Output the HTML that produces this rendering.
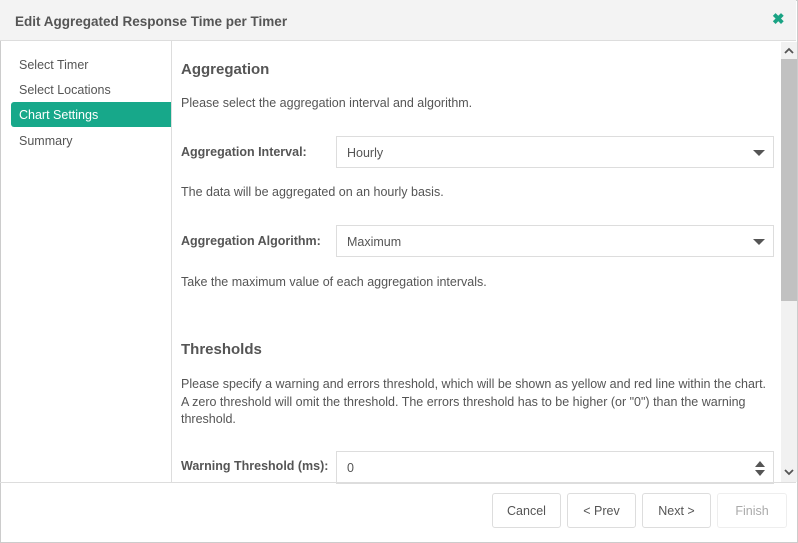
<!DOCTYPE html>
<html><head><style>
*{box-sizing:border-box;margin:0;padding:0}
body{width:798px;height:543px;background:#fff;font-family:"Liberation Sans",sans-serif;color:#555;font-size:12.5px;position:relative;overflow:hidden}
.dlg{position:absolute;left:0;top:0;width:798px;height:543px;border:1px solid #ccc}
.hdr{position:absolute;left:0;top:0;width:796px;height:41px;background:#f3f3f3;border-bottom:1px solid #ddd}
.hdr h1{position:absolute;left:15px;top:14px;font-size:13.5px;font-weight:bold;color:#555}
.x{position:absolute;left:772px;top:10px;color:#1aa384;font-size:15px;font-weight:bold}
.side{position:absolute;left:0;top:41px;width:172px;height:441px;border-right:1px solid #ddd}
.side div{position:absolute;left:11px;width:160px;height:25px;padding-left:8px;line-height:27px;font-size:12.5px}
.side .act{background:#17a88a;color:#fff;border-radius:3px 0 0 3px}
.t{position:absolute;left:181px;white-space:nowrap}
h2{position:absolute;left:181px;font-size:15px;font-weight:bold;color:#555}
.lbl{position:absolute;left:181px;font-weight:bold;font-size:12.5px}
.sel{position:absolute;left:336px;width:438px;height:32px;border:1px solid #ddd;padding-left:10px;line-height:33px}
.arr{position:absolute;right:8px;top:13px;width:0;height:0;border-left:6px solid transparent;border-right:6px solid transparent;border-top:6px solid #555}
.sb{position:absolute;left:781px;top:42px;width:16px;height:440px;background:#f1f1f1}
.thumb{position:absolute;left:781px;top:59px;width:16px;height:242px;background:#c1c1c1}
.foot{position:absolute;left:0;top:482px;width:796px;height:60px;border-top:1px solid #ddd}
.btn{position:absolute;top:493px;height:35px;border:1px solid #ddd;border-radius:3px;text-align:center;line-height:35px;font-size:12.5px;color:#555;background:#fff}
</style></head><body>
<div class="dlg"></div>
<div class="hdr"><h1>Edit Aggregated Response Time per Timer</h1><div class="x">✖</div></div>
<div class="side">
<div style="top:11px">Select Timer</div>
<div style="top:36px">Select Locations</div>
<div class="act" style="top:61px">Chart Settings</div>
<div style="top:87px">Summary</div>
</div>
<h2 style="top:61px">Aggregation</h2>
<div class="t" style="top:96px">Please select the aggregation interval and algorithm.</div>
<div class="lbl" style="top:145px">Aggregation Interval:</div>
<div class="sel" style="top:136px">Hourly<div class="arr"></div></div>
<div class="t" style="top:185px">The data will be aggregated on an hourly basis.</div>
<div class="lbl" style="top:234px">Aggregation Algorithm:</div>
<div class="sel" style="top:225px">Maximum<div class="arr"></div></div>
<div class="t" style="top:275px">Take the maximum value of each aggregation intervals.</div>
<h2 style="top:341px">Thresholds</h2>
<div class="t" style="top:376px;line-height:17.5px">Please specify a warning and errors threshold, which will be shown as yellow and red line within the chart.<br>A zero threshold will omit the threshold. The errors threshold has to be higher (or "0") than the warning<br>threshold.</div>
<div class="lbl" style="top:459px">Warning Threshold (ms):</div>
<div class="sel" style="top:451px;height:33px">0
<div style="position:absolute;right:8px;top:9px;border-left:5px solid transparent;border-right:5px solid transparent;border-bottom:6px solid #555"></div>
<div style="position:absolute;right:8px;top:18px;border-left:5px solid transparent;border-right:5px solid transparent;border-top:6px solid #555"></div></div>
<div class="sb"></div><div class="thumb"></div>
<svg style="position:absolute;left:784px;top:47px" width="10" height="8"><path d="M1 6 L5 2 L9 6" stroke="#555" stroke-width="1.8" fill="none"/></svg>
<svg style="position:absolute;left:784px;top:468px" width="10" height="8"><path d="M1 2 L5 6 L9 2" stroke="#555" stroke-width="1.8" fill="none"/></svg>
<div class="foot"></div>
<div class="btn" style="left:492px;width:69px">Cancel</div>
<div class="btn" style="left:567px;width:69px">&lt; Prev</div>
<div class="btn" style="left:642px;width:69px">Next &gt;</div>
<div class="btn" style="left:717px;width:70px;color:#aaa;border-color:#eee">Finish</div>
</body></html>
